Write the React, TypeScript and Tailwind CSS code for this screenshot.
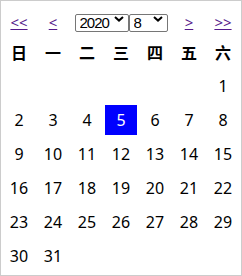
import React, { useState } from 'react'

const WEEK = ['日', '一', '二', '三', '四', '五', '六']

const Chevron = () => (
  <svg width="10" height="6" viewBox="0 0 10 6" className="pointer-events-none absolute top-[6px] right-[5px]">
    <path d="M1 1 L5 4.6 L9 1" fill="none" stroke="#000" strokeWidth="2" />
  </svg>
)

const App: React.FC = () => {
  const [year, setYear] = useState('2020')
  const [month, setMonth] = useState('8')
  const selected = 5

  // 2020年8月1日是星期六
  const first = new Date(Number(year), Number(month) - 1, 1).getDay()
  const days = new Date(Number(year), Number(month), 0).getDate()
  const cells: (number | null)[] = []
  for (let i = 0; i < first; i++) cells.push(null)
  for (let d = 1; d <= days; d++) cells.push(d)
  while (cells.length % 7 !== 0) cells.push(null)
  const rows: (number | null)[][] = []
  for (let i = 0; i < cells.length; i += 7) rows.push(cells.slice(i, i + 7))

  const linkCls = 'text-[#551a8b] underline text-[15px] leading-none'
  const selectCls =
    'appearance-none h-[18px] border border-[#767676] rounded-[2px] pl-[4px] pr-[14px] text-[15px] tracking-[-1px] leading-[16px] bg-white font-["Liberation_Sans",sans-serif]'

  return (
    <div
      className="w-[242px] h-[276px] border border-[#cccccc] bg-white text-black"
      style={{ fontFamily: '"Noto Sans", "Noto Sans CJK SC", sans-serif' }}
    >
      <table className="table-fixed border-separate border-spacing-[2px] text-[16px]">
        <tbody>
          <tr className="h-[32px]">
            <td className="w-[32px] pt-[5px] text-center"><a href="#" className={linkCls}>&lt;&lt;</a></td>
            <td className="w-[32px] pt-[5px] text-center"><a href="#" className={linkCls}>&lt;</a></td>
            <td colSpan={3} className="pt-[5px] text-center">
              <div className="flex justify-center">
                <div className="relative">
                  <select
                    value={year}
                    onChange={(e) => setYear(e.target.value)}
                    className={`${selectCls} w-[54px]`}
                  >
                    {[2018, 2019, 2020, 2021, 2022].map(y => <option key={y} value={y}>{y}</option>)}
                  </select>
                  <Chevron />
                </div>
                <div className="relative">
                  <select
                    value={month}
                    onChange={(e) => setMonth(e.target.value)}
                    className={`${selectCls} w-[39px]`}
                  >
                    {Array.from({ length: 12 }, (_, i) => i + 1).map(m => <option key={m} value={m}>{m}</option>)}
                  </select>
                  <Chevron />
                </div>
              </div>
            </td>
            <td className="w-[32px] pt-[5px] text-center"><a href="#" className={linkCls}>&gt;</a></td>
            <td className="w-[32px] pt-[5px] text-center"><a href="#" className={linkCls}>&gt;&gt;</a></td>
          </tr>
          <tr className="h-[32px]">
            {WEEK.map(w => (
              <th key={w} className="w-[32px] p-0 text-center font-bold">{w}</th>
            ))}
          </tr>
          {rows.map((row, ri) => (
            <tr key={ri} className="h-[32px]">
              {row.map((d, ci) => (
                <td key={ci} className="w-[32px] h-[32px] p-0 text-center align-top">
                  {d !== null && (
                    <div
                      className={`h-[30px] flex items-center justify-center ${d === selected ? 'bg-[#0000ff] text-white' : ''}`}
                    >
                      {d}
                    </div>
                  )}
                </td>
              ))}
            </tr>
          ))}
        </tbody>
      </table>
    </div>
  )
}

export default App
